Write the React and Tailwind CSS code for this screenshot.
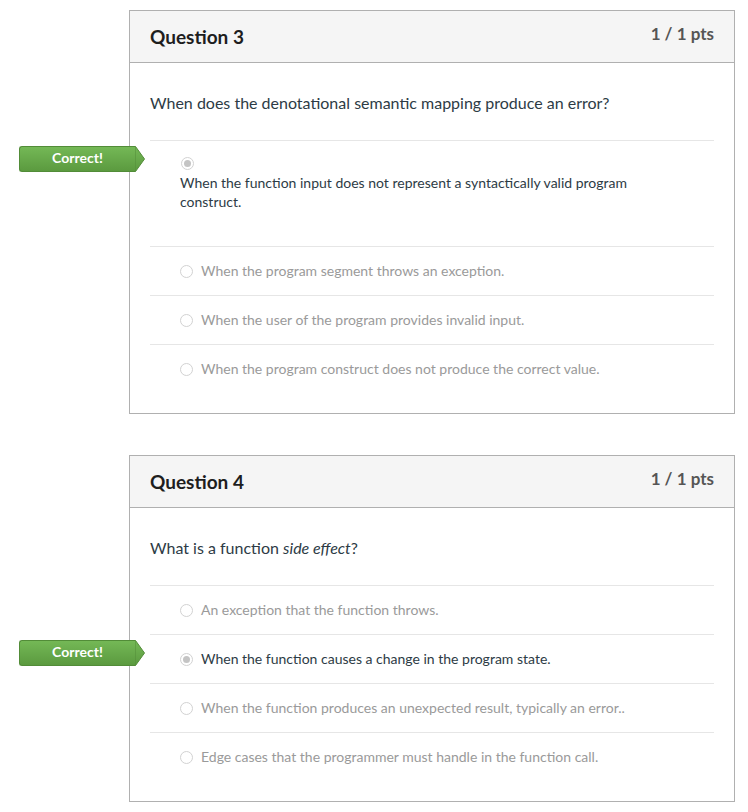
const questions = [
  {
    num: 3,
    text: <>When does the denotational semantic mapping produce an error?</>,
    answers: [
      {
        text: 'When the function input does not represent a syntactically valid program construct.',
        picked: true,
        block: true,
      },
      { text: 'When the program segment throws an exception.' },
      { text: 'When the user of the program provides invalid input.' },
      { text: 'When the program construct does not produce the correct value.' },
    ],
  },
  {
    num: 4,
    text: (
      <>
        What is a function <em>side effect</em>?
      </>
    ),
    answers: [
      { text: 'An exception that the function throws.' },
      { text: 'When the function causes a change in the program state.', picked: true },
      { text: 'When the function produces an unexpected result, typically an error..' },
      { text: 'Edge cases that the programmer must handle in the function call.' },
    ],
  },
];

function Radio({ checked }) {
  return (
    <span className="flex h-[13px] w-[13px] shrink-0 items-center justify-center rounded-full border border-[#d2d2d2] bg-white">
      {checked && <span className="h-[7px] w-[7px] rounded-full bg-[#c4c4c4]" />}
    </span>
  );
}

function CorrectBadge() {
  return (
    <div className="absolute left-[-131px] top-[5px] flex h-[26px]">
      <div className="flex w-[116px] items-center justify-center rounded-l-[3px] border border-r-0 border-[#528c38] bg-gradient-to-b from-[#74b856] to-[#5b9a3f] pb-[3px] text-[14px] font-bold leading-[18px] text-white">
        Correct!
      </div>
      <svg width="10" height="26" viewBox="0 0 10 26">
        <defs>
          <linearGradient id="g" x1="0" y1="0" x2="0" y2="1">
            <stop offset="0" stopColor="#74b856" />
            <stop offset="1" stopColor="#5b9a3f" />
          </linearGradient>
        </defs>
        <path d="M0 0.5 L0.5 0.5 L9.5 13 L0.5 25.5 L0 25.5 Z" fill="url(#g)" stroke="#528c38" strokeWidth="1" />
      </svg>
    </div>
  );
}

function Answer({ answer, last }) {
  if (answer.block) {
    return (
      <div className="relative border-t border-[#e6e6e6] pb-[35px] pl-[30px] pt-[16px]">
        <CorrectBadge />
        <div className="ml-[1px]">
          <Radio checked />
        </div>
        <div className="mt-[3px] w-[470px] text-[14px] leading-[19px] text-[#2d3b45]">{answer.text}</div>
      </div>
    );
  }
  return (
    <div className={`relative flex items-center gap-2 border-t border-[#e6e6e6] pl-[30px] ${last ? 'pb-[34px] pt-[14px]' : 'py-[14px]'}`}>
      {answer.picked && <CorrectBadge />}
      <Radio checked={answer.picked} />
      <span className={`text-[14px] leading-[20px] ${answer.picked ? 'text-[#2d3b45]' : 'text-[#9a9a9a]'}`}>{answer.text}</span>
    </div>
  );
}

function QuestionCard({ q }) {
  return (
    <div className="ml-[129px] w-[606px] border border-[#b0b0b0] bg-white">
      <div className="flex h-[52px] items-start justify-between border-b border-[#b0b0b0] bg-[#f5f5f5] px-5">
        <h2 className="mt-[13px] text-[19px] font-bold leading-[25px] text-[#1e1e1e]">Question {q.num}</h2>
        <span className="mt-[11px] text-[17px] font-bold leading-[23px] text-[#555]">1 / 1 pts</span>
      </div>
      <div className="px-5">
        <p className="pb-[25px] pt-[28px] text-[16px] leading-[24px] text-[#2d3b45]">{q.text}</p>
        {q.answers.map((a, i) => (
          <Answer key={i} answer={a} last={i === q.answers.length - 1} />
        ))}
      </div>
    </div>
  );
}

export default function App() {
  return (
    <div className="min-h-screen bg-white pt-[10px]" style={{ fontFamily: 'Lato, "Open Sans", sans-serif' }}>
      <div className="flex flex-col gap-[41px]">
        {questions.map(q => (
          <QuestionCard key={q.num} q={q} />
        ))}
      </div>
    </div>
  );
}
